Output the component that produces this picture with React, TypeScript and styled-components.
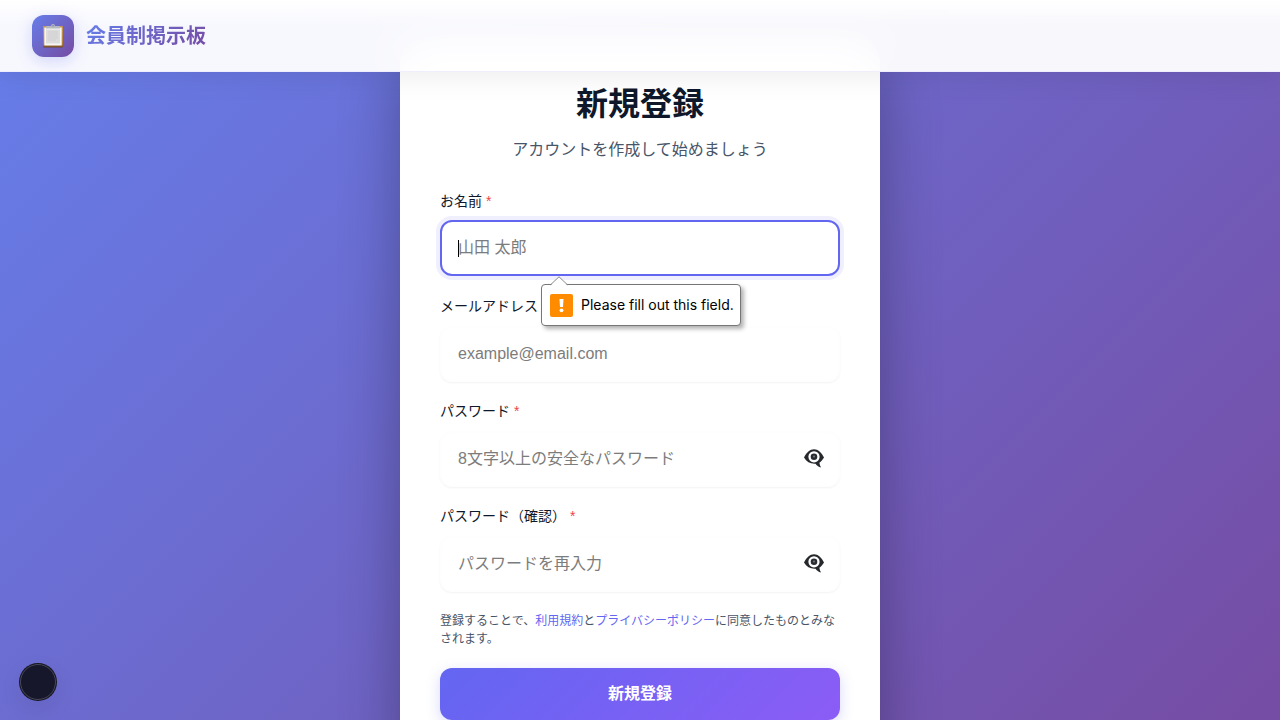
import React, { useState } from "react";
import styled, { createGlobalStyle } from "styled-components";

const GlobalStyle = createGlobalStyle`
  *, *::before, *::after { box-sizing: border-box; }
  body {
    margin: 0;
    background: #fff;
    color: #0f172a;
    font-family: "Liberation Sans", "Noto Sans CJK JP", sans-serif;
    font-size: 16px;
  }
`;

const Page = styled.div`
  position: relative;
  height: 100vh;
  overflow: hidden;
`;

const Header = styled.header`
  position: absolute;
  top: 0;
  left: 0;
  right: 0;
  z-index: 10;
  height: 72px;
  display: flex;
  align-items: center;
  padding: 0 32px;
  background: linear-gradient(180deg, #fff 0, rgba(255, 255, 255, 0.95) 26px);
  backdrop-filter: blur(20px);
  border-bottom: 1px solid rgba(99, 102, 241, 0.1);
  box-shadow: 0 4px 30px rgba(0, 0, 0, 0.08);
`;

const Brand = styled.a`
  display: flex;
  align-items: center;
  gap: 12px;
  text-decoration: none;
`;

const BrandMark = styled.span`
  display: flex;
  align-items: center;
  justify-content: center;
  width: 42px;
  height: 42px;
  border-radius: 12px;
  background: linear-gradient(135deg, #667eea 0%, #764ba2 100%);
  box-shadow: 0 4px 15px rgba(99, 102, 241, 0.25);
`;

const BrandName = styled.span`
  font-size: 20px;
  font-weight: 700;
  line-height: 30px;
  color: transparent;
  background: linear-gradient(135deg, #667eea 0%, #764ba2 100%);
  background-clip: text;
  -webkit-background-clip: text;
`;

const Main = styled.main`
  display: flex;
  justify-content: center;
  align-items: flex-start;
  min-height: 100%;
  padding: 39px 20px 0;
  background: linear-gradient(135deg, #667eea 0%, #764ba2 100%);
`;

const Card = styled.section`
  width: 100%;
  max-width: 480px;
  padding: 40px;
  border-radius: 24px;
  background: #fff;
  box-shadow: 0 20px 60px rgba(0, 0, 0, 0.3);
`;

const Title = styled.h1`
  margin: 0 0 8px;
  font-size: 32px;
  font-weight: 700;
  line-height: 50px;
  text-align: center;
`;

const Subtitle = styled.p`
  margin: 0 0 28px;
  line-height: 26px;
  text-align: center;
  color: #475569;
`;

const FieldGroup = styled.div`
  margin-bottom: 19px;
`;

const Label = styled.label`
  display: block;
  margin-bottom: 10px;
  font-size: 14px;
  font-weight: 400;
  line-height: 20px;
`;

const Required = styled.span`
  color: #ef4444;
`;

const Control = styled.div`
  position: relative;
`;

const TextInput = styled.input<{ $active?: boolean }>`
  display: block;
  width: 100%;
  height: 56px;
  padding: 0 16px;
  border: 2px solid ${(p) => (p.$active ? "#6366f1" : "#fefefe")};
  border-radius: 12px;
  outline: none;
  background: #fff;
  color: #0f172a;
  caret-color: ${(p) => (p.$active ? "transparent" : "auto")};
  font: inherit;
  transform: ${(p) => (p.$active ? "translateY(-1px)" : "none")};
  box-shadow: ${(p) =>
    p.$active ? "0 0 0 4px rgba(99, 102, 241, 0.1)" : "0 1px 2px rgba(0, 0, 0, 0.05)"};
  &::placeholder {
    color: #7c7c7c;
    opacity: 1;
  }
`;

const Caret = styled.span`
  position: absolute;
  top: 19px;
  left: 18px;
  width: 1px;
  height: 17px;
  background: #000;
`;

const RevealButton = styled.button`
  position: absolute;
  top: 13px;
  right: 12px;
  display: flex;
  align-items: center;
  justify-content: center;
  width: 28px;
  height: 28px;
  padding: 0;
  border: 0;
  background: none;
  cursor: pointer;
`;

const Tooltip = styled.div`
  position: absolute;
  top: 63px;
  left: 101px;
  z-index: 5;
  display: flex;
  align-items: center;
  gap: 8px;
  height: 42px;
  padding: 0 6px 0 8px;
  border: 1px solid #767676;
  border-radius: 4px;
  background: #fff;
  color: #000;
  font-family: Inter, sans-serif;
  font-size: 14px;
  line-height: 20px;
  white-space: nowrap;
  box-shadow: 3px 3px 4px rgba(0, 0, 0, 0.3);
`;

const TooltipArrow = styled.svg`
  position: absolute;
  top: -9px;
  left: 8px;
`;

const Terms = styled.p`
  margin: 20px 0;
  font-size: 12px;
  line-height: 18px;
  color: #475569;
`;

const TermsLink = styled.a`
  color: #6366f1;
  text-decoration: none;
`;

const SubmitButton = styled.button`
  display: block;
  width: 100%;
  height: 52px;
  padding: 0 16px 4px;
  border: 0;
  border-radius: 12px;
  background: linear-gradient(135deg, #6366f1 0%, #8b5cf6 100%);
  color: #fff;
  font: inherit;
  font-weight: 700;
  box-shadow: 0 4px 14px rgba(99, 102, 241, 0.25);
  cursor: pointer;
`;

const DevButton = styled.button`
  position: absolute;
  left: 20px;
  bottom: 20px;
  width: 36px;
  height: 36px;
  padding: 0;
  border: 1px solid #47475a;
  border-radius: 50%;
  background: #17172b;
  box-shadow: 0 0 0 1px #171720, 0 8px 24px rgba(0, 0, 0, 0.08);
`;

const ClipboardIcon = () => (
  <svg width="22" height="26" viewBox="0 0 22 26" aria-hidden="true">
    <defs>
      <linearGradient id="board" x1="0" y1="0" x2="0" y2="1">
        <stop offset="0" stopColor="#c9974f" />
        <stop offset="0.85" stopColor="#b07c3c" />
        <stop offset="1" stopColor="#6f4a25" />
      </linearGradient>
    </defs>
    <rect x="1" y="3" width="20" height="21.500" rx="0.8" fill="url(#board)" />
    <rect x="2.300" y="4.500" width="17.400" height="18" fill="#f6f6f6" />
    <rect x="4" y="6.500" width="14" height="14" fill="#dcdcdc" />
    <path d="M6 9h10M6 11h10M6 13h10M6 15h10M6 17h8" stroke="#cfcfcf" strokeWidth="1" />
    <path d="M4 5.500V4q0-1 1-1h4q0-2 2-2t2 2h4q1 0 1 1v1.500z" fill="#b4b8bf" />
    <circle cx="11" cy="2.800" r="0.800" fill="#7f83a9" />
  </svg>
);

const EyeIcon = () => (
  <svg width="22" height="22" viewBox="0 0 22 22" aria-hidden="true">
    <path
      d="M1 10.500C3.500 5.500 7 2.300 11 2.300s7.500 3.200 10 8.200c-1.300 2.300-2.900 4-4.600 5.200.2 1.700.7 3.300 1.600 4.700-2.500-.5-4.300-1.900-5.500-3.700C7.400 17 3.600 15 1 10.500z"
      fill="#25282c"
    />
    <circle cx="11" cy="9.800" r="5.600" fill="#fff" />
    <circle cx="11" cy="9.800" r="3.300" fill="#292c30" />
    <circle cx="11" cy="9.500" r="0.900" fill="#7b8188" />
  </svg>
);

type FieldProps = {
  id: string;
  label: string;
  type?: string;
  placeholder: string;
  active?: boolean;
  error?: string;
};

function Field({ id, label, type = "text", placeholder, active, error }: FieldProps) {
  const [shown, setShown] = useState(false);
  const secret = type === "password";
  return (
    <FieldGroup>
      <Label htmlFor={id}>
        {label} <Required>*</Required>
      </Label>
      <Control>
        <TextInput
          id={id}
          name={id}
          type={secret && shown ? "text" : type}
          placeholder={placeholder}
          $active={active}
          required
        />
        {active && <Caret />}
        {secret && (
          <RevealButton type="button" aria-label="パスワードを表示" onClick={() => setShown(!shown)}>
            <EyeIcon />
          </RevealButton>
        )}
        {error && (
          <Tooltip role="alert">
            <TooltipArrow width="18" height="10" viewBox="0 0 18 10" aria-hidden="true">
              <path d="M0 10L1 9 9 1l8 8 1 1z" fill="#fff" />
              <path d="M0.500 8.800L9 0.800l8.500 8" fill="none" stroke="#8a8a8a" />
            </TooltipArrow>
            <svg width="23" height="23" viewBox="0 0 23 23" aria-hidden="true">
              <rect width="23" height="23" rx="2" fill="#ff8c00" />
              <path d="M9.500 5h4l-.5 8h-3z" fill="#fff" />
              <circle cx="11.500" cy="16.300" r="1.900" fill="#fff" />
            </svg>
            <span>{error}</span>
          </Tooltip>
        )}
      </Control>
    </FieldGroup>
  );
}

export default function App() {
  return (
    <Page lang="ja">
      <GlobalStyle />
      <Main>
        <Card>
          <Title>新規登録</Title>
          <Subtitle>アカウントを作成して始めましょう</Subtitle>
          <form noValidate onSubmit={(e) => e.preventDefault()}>
            <Field
              id="name"
              label="お名前"
              placeholder="山田 太郎"
              active
              error="Please fill out this field."
            />
            <Field id="email" label="メールアドレス" type="email" placeholder="example@email.com" />
            <Field
              id="password"
              label="パスワード"
              type="password"
              placeholder="8文字以上の安全なパスワード"
            />
            <Field
              id="confirm"
              label="パスワード（確認）"
              type="password"
              placeholder="パスワードを再入力"
            />
            <Terms>
              登録することで、<TermsLink href="#terms">利用規約</TermsLink>と
              <TermsLink href="#privacy">プライバシーポリシー</TermsLink>
              に同意したものとみなされます。
            </Terms>
            <SubmitButton type="submit">新規登録</SubmitButton>
          </form>
        </Card>
      </Main>
      <Header>
        <Brand href="#home">
          <BrandMark>
            <ClipboardIcon />
          </BrandMark>
          <BrandName>会員制掲示板</BrandName>
        </Brand>
      </Header>
      <DevButton type="button" aria-label="開発ツール" />
    </Page>
  );
}
